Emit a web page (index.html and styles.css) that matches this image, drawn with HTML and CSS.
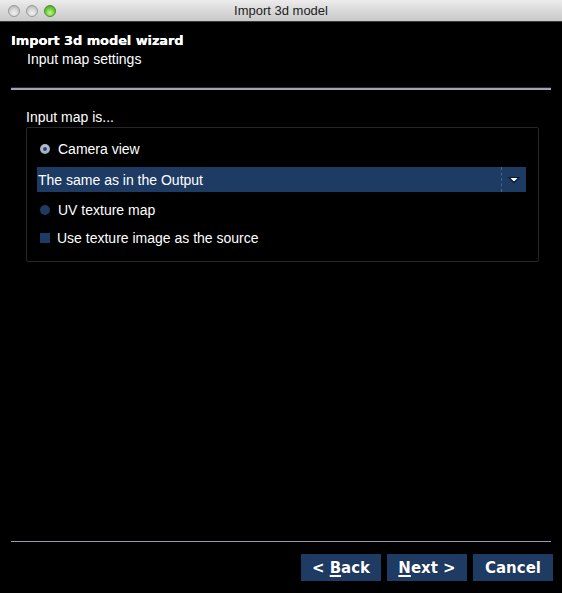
FILE: index.html
```html
<!DOCTYPE html>
<html>
<head>
<meta charset="utf-8">
<link rel="stylesheet" href="styles.css">
</head>
<body>
<div class="window">
  <div class="titlebar">
    <div class="lights">
      <span class="light gray"></span>
      <span class="light gray"></span>
      <span class="light green"></span>
    </div>
    <div class="wtitle">Import 3d model</div>
  </div>
  <div class="header">
    <div class="h-title">Import 3d model wizard</div>
    <div class="h-sub">Input map settings</div>
  </div>
  <div class="sep sep-top"></div>
  <div class="section">
    <div class="section-label">Input map is...</div>
    <div class="group">
      <div class="row">
        <span class="radio checked"><span class="dot"></span></span>
        <span class="label">Camera view</span>
      </div>
      <div class="combo">
        <span class="combo-text">The same as in the Output</span>
        <span class="combo-btn">
          <svg width="12" height="8" viewBox="0 0 12 8"><path d="M1 1.5 L11 1.5 L6 6.5 Z" fill="#ffffff" stroke="#0b1730" stroke-width="1.2" stroke-linejoin="round"/></svg>
        </span>
      </div>
      <div class="row">
        <span class="radio"></span>
        <span class="label">UV texture map</span>
      </div>
      <div class="row row-check">
        <span class="check"></span>
        <span class="label">Use texture image as the source</span>
      </div>
    </div>
  </div>
  <div class="spacer"></div>
  <div class="sep sep-bottom"></div>
  <div class="buttons">
    <button class="btn">&lt; <u>B</u>ack</button>
    <button class="btn"><u>N</u>ext &gt;</button>
    <button class="btn">Cancel</button>
  </div>
</div>
</body>
</html>
```

FILE: styles.css
```css
html, body {
  margin: 0;
  padding: 0;
  background: #000;
}
.window {
  width: 562px;
  height: 593px;
  display: flex;
  flex-direction: column;
  background: #000;
  overflow: hidden;
  font-family: "Liberation Sans", Arial, sans-serif;
  color: #fff;
}
.titlebar {
  height: 21px;
  border-bottom: 1px solid #3a3a3a;
  background: linear-gradient(#ececec, #d6d6d6 60%, #c9c9c9);
  display: flex;
  align-items: center;
  position: relative;
}
.lights {
  display: flex;
  gap: 6px;
  padding-left: 8px;
  padding-top: 1px;
}
.light {
  width: 12px;
  height: 12px;
  border-radius: 50%;
  box-sizing: border-box;
}
.light.gray {
  background: radial-gradient(circle at 50% 70%, #f2f2f2 0%, #d4d4d4 50%, #a9a9a9 100%);
  border: 1px solid #9a9a9a;
}
.light.green {
  background: radial-gradient(circle at 50% 70%, #c8f59a 0%, #7bd244 45%, #3f9b16 100%);
  border: 1px solid #4b8c2a;
}
.wtitle {
  position: absolute;
  left: 0;
  right: 0;
  top: 3px;
  text-align: center;
  font-size: 13px;
  color: #222;
  pointer-events: none;
}
.header {
  padding: 10px 0 0 11px;
}
.h-title {
  font-family: "DejaVu Sans", sans-serif;
  font-weight: bold;
  font-size: 13px;
  line-height: 18px;
  letter-spacing: -0.1px;
  text-shadow: 0 0 0.6px #fff;
}
.h-sub {
  padding-left: 16px;
  font-size: 14px;
  line-height: 16px;
  margin-top: 1px;
}
.sep {
  margin: 0 11px;
  height: 2px;
  background: #a3a3b3;
}
.sep-top {
  margin-top: 20px;
  border-top: 1px solid #2a2a30;
}
.section {
  padding: 19px 0 0 26px;
}
.section-label {
  font-size: 14px;
  line-height: 16px;
}
.group {
  margin-top: 2px;
  border: 1px solid #262626;
  border-radius: 2px;
  padding: 10px 12px 12px 10px;
  box-sizing: border-box;
  width: 513px;
  display: flex;
  flex-direction: column;
  gap: 7px;
}
.row {
  height: 22px;
  display: flex;
  align-items: center;
  padding-left: 3px;
  gap: 8px;
  font-size: 14px;
}
.row-check {
  margin-top: -1px;
  gap: 7px;
}
.radio {
  width: 10px;
  height: 10px;
  border-radius: 50%;
  background: #1d3b63;
  display: flex;
  align-items: center;
  justify-content: center;
  flex: none;
}
.radio.checked {
  background: radial-gradient(circle at 50% 40%, #c3cbd9, #8d9ab2);
}
.radio .dot {
  width: 4px;
  height: 4px;
  border-radius: 50%;
  background: #2c4670;
}
.check {
  width: 10px;
  height: 10px;
  background: #1d3b63;
  flex: none;
}
.combo {
  height: 25px;
  background: #1d3b63;
  display: flex;
  align-items: center;
  font-size: 14px;
}
.combo-text {
  flex: 1;
  padding-left: 1px;
}
.combo-btn {
  width: 24px;
  height: 25px;
  border-left: 1px dashed #4a6590;
  display: flex;
  align-items: center;
  justify-content: center;
}
.spacer {
  flex: 1;
}
.sep-bottom {
  height: 1px;
  background: #9a9ab2;
  margin-bottom: 12px;
}
.buttons {
  display: flex;
  justify-content: flex-end;
  gap: 6px;
  padding-right: 9px;
  margin-bottom: 12px;
}
.btn {
  width: 80px;
  height: 27px;
  border: none;
  background: #1d3b63;
  color: #fff;
  font-family: "DejaVu Sans", sans-serif;
  font-weight: bold;
  font-size: 15px;
  padding: 0;
  text-shadow: 0 0 1px #0a1430;
}
.btn u {
  text-decoration-thickness: 2px;
  text-underline-offset: 2px;
}
```
